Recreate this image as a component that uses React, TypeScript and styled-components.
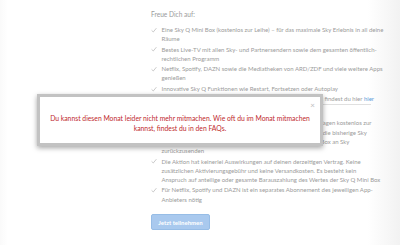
import React from "react";
import styled, { createGlobalStyle } from "styled-components";

const Global = createGlobalStyle`
  html, body { margin: 0; padding: 0; }
  body {
    width: 400px;
    height: 245px;
    overflow: hidden;
    background: linear-gradient(to right, #fafafa 0px, #ffffff 8px, #ffffff 368px, #f2f2f2 400px);
    font-family: Lato, "Open Sans", sans-serif;
  }
`;

const Page = styled.div`
  position: relative;
  width: 400px;
  height: 245px;
`;

const Column = styled.div`
  padding: 9px 10px 0 151px;
  display: flex;
  flex-direction: column;
  color: #9b9b9b;
`;

const Heading = styled.div`
  font-size: 6.6px;
  line-height: 10px;
  margin-bottom: 6px;
`;

const List = styled.ul`
  list-style: none;
  margin: 0;
  padding: 0;
  display: flex;
  flex-direction: column;
  gap: 1px;
`;

const Item = styled.li<{ $spaced?: boolean }>`
  display: flex;
  gap: 4.5px;
  font-size: 6px;
  line-height: 9.3px;
  ${(p) => (p.$spaced ? "margin-top: 12px;" : "")}
`;

const Divider = styled.li`
  height: 0;
  margin: 0 0 0 10.5px;
  width: 209px;
  border-top: 1px solid #e0e0e0;
`;

const Check = styled.svg<{ $hidden?: boolean }>`
  flex: 0 0 auto;
  width: 6px;
  height: 6px;
  margin-top: 1.8px;
  visibility: ${(p) => (p.$hidden ? "hidden" : "visible")};
`;

const ItemText = styled.span`
  flex: 1;
  display: flex;
  flex-direction: column;
`;

const Line = styled.span`
  white-space: nowrap;
`;

const Link = styled.span`
  color: #5b9bd8;
`;

const Button = styled.button`
  align-self: flex-start;
  margin-top: 10px;
  width: 59px;
  height: 16px;
  padding: 0;
  border: 1px solid #97bde6;
  border-radius: 2px;
  background: #a9c9ee;
  color: #ffffff;
  font-family: inherit;
  font-weight: 700;
  font-size: 6px;
`;

const Modal = styled.div`
  position: absolute;
  left: 37px;
  top: 94px;
  width: 280px;
  height: 46px;
  background: #ffffff;
  border: 3px solid #c2c2c2;
  box-shadow: 0 2px 5px rgba(0, 0, 0, 0.35);
  display: flex;
  align-items: center;
  justify-content: center;
`;

const Close = styled.span`
  position: absolute;
  right: 5px;
  top: 4px;
  color: #bdbdbd;
  font-size: 8px;
  line-height: 8px;
`;

const Message = styled.p`
  margin: 8px 0 0;
  color: #c0282d;
  font-size: 6.8px;
  line-height: 9.6px;
  text-align: center;
  display: flex;
  flex-direction: column;
`;

const CheckIcon = ({ hidden }: { hidden?: boolean }) => (
  <Check viewBox="0 0 10 10" $hidden={hidden}>
    <path d="M1 5.6 L3.8 8.3 L9 2" fill="none" stroke="#a6a6a6" strokeWidth="1" />
  </Check>
);

type Entry = { lines: React.ReactNode[]; spaced?: boolean };

const top: Entry[] = [
  { lines: ["Eine Sky Q Mini Box (kostenlos zur Leihe) – für das maximale Sky Erlebnis in all deine", "Räume"] },
  { lines: ["Bestes Live-TV mit allen Sky- und Partnersendern sowie dem gesamten öffentlich-", "rechtlichen Programm"] },
  { lines: ["Netflix, Spotify, DAZN sowie die Mediatheken von ARD/ZDF und viele weitere Apps", "genießen"] },
  { lines: ["Innovative Sky Q Funktionen wie Restart, Fortsetzen oder Autoplay"] },
  {
    lines: [
      <>
        Alle Infos zur Einrichtung und Nutzung deiner Sky Q Mini Box findest du hier <Link>hier</Link>
      </>,
    ],
  },
];

const bottom: Entry[] = [
  {
    spaced: true,
    lines: [
      "Wir senden dir deine neue Sky Q Mini Box innerhalb von 14 Tagen kostenlos zur",
      "Verfügung. Voraussetzung für die Teilnahme an der Aktion ist die bisherige Sky",
      "Mini Box innerhalb von 14 Tagen nach Erhalt der Sky Q Mini Box an Sky",
      "zurückzusenden",
    ],
  },
  {
    lines: [
      "Die Aktion hat keinerlei Auswirkungen auf deinen derzeitigen Vertrag. Keine",
      "zusätzlichen Aktivierungsgebühr und keine Versandkosten. Es besteht kein",
      "Anspruch auf anteilige oder gesamte Barauszahlung des Wertes der Sky Q Mini Box",
    ],
  },
  { lines: ["Für Netflix, Spotify und DAZN ist ein separates Abonnement des jeweiligen App-", "Anbieters nötig"] },
];

const renderEntry = (e: Entry, key: string) => (
  <Item key={key} $spaced={e.spaced}>
    <CheckIcon />
    <ItemText>
      {e.lines.map((l, j) => (
        <Line key={j}>{l}</Line>
      ))}
    </ItemText>
  </Item>
);

export default function App() {
  return (
    <Page>
      <Global />
      <Column>
        <Heading>Freue Dich auf:</Heading>
        <List>
          {top.map((e, i) => renderEntry(e, "t" + i))}
          <Divider />
          {bottom.map((e, i) => renderEntry(e, "b" + i))}
        </List>
        <Button>Jetzt teilnehmen</Button>
      </Column>
      <Modal>
        <Close>×</Close>
        <Message>
          <span>Du kannst diesen Monat leider nicht mehr mitmachen. Wie oft du im Monat mitmachen</span>
          <span>kannst, findest du in den FAQs.</span>
        </Message>
      </Modal>
    </Page>
  );
}
